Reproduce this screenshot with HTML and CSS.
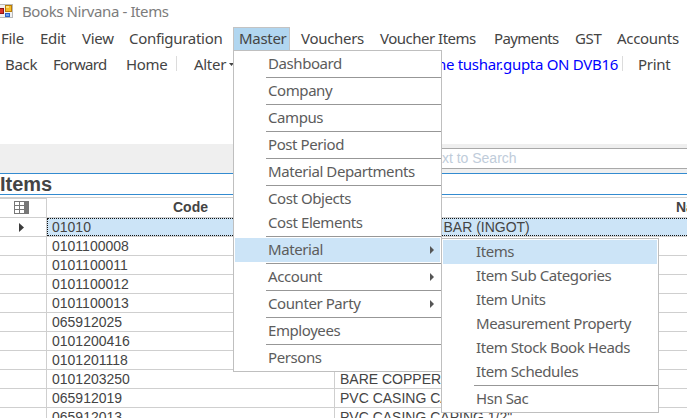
FILE: index.html
```html
<!DOCTYPE html>
<html lang="en">
<head>
<meta charset="utf-8">
<title>Books Nirvana - Items</title>
<link rel="stylesheet" href="styles.css">
</head>
<body>
<div class="window">
  <header class="titlebar">
    <svg class="app-icon" width="13" height="14" viewBox="0 0 13 14" shape-rendering="crispEdges">
      <rect width="13" height="14" fill="#b9b9b9"/>
      <rect y="1" width="12" height="12" fill="#f1f1f1"/>
      <rect y="4" width="4" height="6" fill="#8e1414"/>
      <rect y="5" width="3" height="4" fill="#d93028"/>
      <rect x="5" y="1" width="7" height="7" fill="#b97d08"/>
      <rect x="6" y="2" width="5" height="5" fill="#f5bd2b"/>
      <rect x="6" y="2" width="3" height="2" fill="#ffe27c"/>
      <rect x="5" y="9" width="5" height="4" fill="#2d62c4"/>
      <rect x="6" y="10" width="3" height="2" fill="#6fa3f2"/>
    </svg>
    <span class="title">Books Nirvana - Items</span>
  </header>
  <nav class="menubar">
    <span class="w-file">File</span><span class="w-edit">Edit</span><span class="w-view">View</span><span class="w-conf">Configuration</span><span class="w-master active">Master</span><span class="w-vouchers">Vouchers</span><span class="w-vitems">Voucher Items</span><span class="w-pay">Payments</span><span class="w-gst">GST</span><span class="w-acc">Accounts</span>
  </nav>
  <div class="toolbar">
    <span class="t-back">Back</span><span class="t-forward">Forward</span><span class="t-home">Home</span><i class="divider"></i><span class="t-alter">Alter</span><i class="caret"></i><span class="t-user">Welcome tushar.gupta ON DVB16</span><i class="divider"></i><span class="t-print">Print</span>
  </div>
  <div class="searchband"><div class="search">Enter Text to Search</div></div>
  <h1 class="heading">Items</h1>
  <div class="grid">
    <div class="row head">
      <div class="mark"><svg width="15" height="13" viewBox="0 0 15 13" shape-rendering="crispEdges"><path d="M0 0H15V13H0Z" fill="#777"/><path d="M1 1h4v3H1zM6 1h4v3H6zM1 5h4v3H1zM6 5h4v3H6zM1 9h4v3H1zM6 9h4v3H6z" fill="#fff"/></svg></div>
      <div class="code">Code</div><div class="name">Name</div>
    </div>
    <div class="row selected"><div class="mark"><svg width="5" height="9" viewBox="0 0 5 9"><path d="M0 0L5 4.5L0 9Z" fill="#3b3b3b"/></svg></div><div class="code">01010</div><div class="name">COPPER WIRE BAR (INGOT)</div></div>
    <div class="row"><div class="mark"></div><div class="code">0101100008</div><div class="name"></div></div>
    <div class="row"><div class="mark"></div><div class="code">0101100011</div><div class="name"></div></div>
    <div class="row"><div class="mark"></div><div class="code">0101100012</div><div class="name"></div></div>
    <div class="row"><div class="mark"></div><div class="code">0101100013</div><div class="name"></div></div>
    <div class="row"><div class="mark"></div><div class="code">065912025</div><div class="name"></div></div>
    <div class="row"><div class="mark"></div><div class="code">0101200416</div><div class="name"></div></div>
    <div class="row"><div class="mark"></div><div class="code">0101201118</div><div class="name"></div></div>
    <div class="row"><div class="mark"></div><div class="code">0101203250</div><div class="name">BARE COPPER</div></div>
    <div class="row"><div class="mark"></div><div class="code">065912019</div><div class="name">PVC CASING CAPING</div></div>
    <div class="row"><div class="mark"></div><div class="code">065912013</div><div class="name">PVC CASING CAPING 1/2"</div></div>
  </div>

  <div class="menu master-menu">
    <div class="item">Dashboard</div><hr>
    <div class="item">Company</div><hr>
    <div class="item">Campus</div><hr>
    <div class="item">Post Period</div><hr>
    <div class="item">Material Departments</div><hr>
    <div class="item">Cost Objects</div>
    <div class="item">Cost Elements</div><hr>
    <div class="item hot">Material<i class="arrow"></i></div><hr>
    <div class="item">Account<i class="arrow"></i></div><hr>
    <div class="item">Counter Party<i class="arrow"></i></div><hr>
    <div class="item">Employees</div><hr>
    <div class="item">Persons</div>
  </div>
  <div class="menu sub-menu">
    <div class="item hot">Items</div>
    <div class="item">Item Sub Categories</div>
    <div class="item">Item Units</div>
    <div class="item">Measurement Property</div>
    <div class="item">Item Stock Book Heads</div>
    <div class="item">Item Schedules</div><hr>
    <div class="item">Hsn Sac</div>
  </div>
</div>
</body>
</html>
```
FILE: styles.css
```css
* { box-sizing: border-box; }
body { margin: 0; background: #fff; overflow: hidden; }
.window {
  position: relative;
  width: 687px;
  height: 418px;
  overflow: hidden;
  font: 15px/24px "Noto Sans", "Open Sans", sans-serif;
  color: #444;
  white-space: nowrap;
}
.titlebar { display: flex; height: 27px; padding-top: 4px; color: #7c7c7c; }
.app-icon { flex: none; margin-right: 9px; }
.title { line-height: 14px; letter-spacing: -0.4px; }

.menubar { display: flex; height: 24px; line-height: 22px; padding-left: 1px; letter-spacing: -0.3px; }
.menubar span { flex: none; }
.w-file { width: 39px; }
.w-edit { width: 42px; }
.w-view { width: 47px; }
.w-conf { width: 104px; }
.w-master { width: 57px; }
.menubar .active { padding-left: 5px; border: 1px solid #c3c3c3; border-bottom: 0; background: #b1d6f0; line-height: 20px; }
.w-vouchers { width: 90px; padding-left: 11px; }
.w-vitems { width: 114px; letter-spacing: -0.5px; }
.w-pay { width: 81px; letter-spacing: -0.6px; }
.w-gst { width: 42px; }

.toolbar { display: flex; height: 93px; padding: 1px 0 0 5px; letter-spacing: -0.3px; }
.toolbar span { flex: none; }
.t-back { width: 48px; }
.t-forward { width: 73px; letter-spacing: -0.7px; }
.t-home { width: 50px; }
.divider { flex: none; width: 1px; height: 15px; margin-top: 4px; background: #dcdcdc; }
.t-alter { width: 52px; padding-left: 17px; }
.caret { width: 5px; height: 3px; margin-top: 11px; background: #444; clip-path: polygon(0 0, 100% 0, 50% 100%); }
.t-user { width: 388px; padding-right: 4px; text-align: right; color: #00f; }
.t-print { padding-left: 15px; }

.searchband { height: 29px; padding: 4px 0 0 334px; background: #efefef; }
.search { height: 21px; padding-left: 55px; border: 1px solid #a9a9a9; border-right: 0; background: #fff; color: #c0ccda; font: 14px/19px "Liberation Sans", sans-serif; }
.heading { height: 22px; margin: 0; border: solid #338bd0; border-width: 1px 0; color: #444; font: bold 20px/20px "Liberation Sans", sans-serif; }

.grid { margin-top: 2px; border-top: 1px solid #cfcfcf; font: 14px/18px "Liberation Sans", sans-serif; }
.row { display: grid; grid-template-columns: 47px 288px 1fr; height: 19px; }
.row > div { border: solid #cfcfcf; border-width: 0 1px 1px 0; overflow: hidden; }
.row .name { border-right: 0; }
.code, .name { padding-left: 5px; }
.mark { display: flex; align-items: center; justify-content: center; padding-right: 4px; }
.head { height: 20px; font-weight: bold; line-height: 19px; }
.head .mark { padding-bottom: 2px; border-top-width: 1px; }
.head .code { padding: 0; text-align: center; }
.head .name { padding-left: 341px; }
.selected { border-bottom: 1px solid #cfcfcf; }
.selected > .mark { border-bottom: 0; }
.selected > .code, .selected > .name { border: dotted #111; border-width: 1px 0; background: #cce4f7; line-height: 17px; }
.selected > .code { border-left-width: 1px; padding-left: 4px; }

.menu { position: absolute; padding: 1px 0; border: 1px solid #bfbfbf; background: #fff; color: #5c5c5c; }
.menu hr { height: 1px; margin: 1px 0 1px 32px; border: 0; background: #979797; }
.item { display: flex; height: 24px; margin: 0 1px; padding-left: 33px; line-height: 22px; letter-spacing: -0.42px; }
.hot { background: #cce4f7; }
.arrow { width: 4px; height: 8px; margin: 8px 6px 0 auto; background: #555; clip-path: polygon(0 0, 100% 50%, 0 100%); }
.master-menu { left: 233px; top: 50px; width: 209px; }
.sub-menu { left: 441px; top: 238px; width: 218px; }
```
